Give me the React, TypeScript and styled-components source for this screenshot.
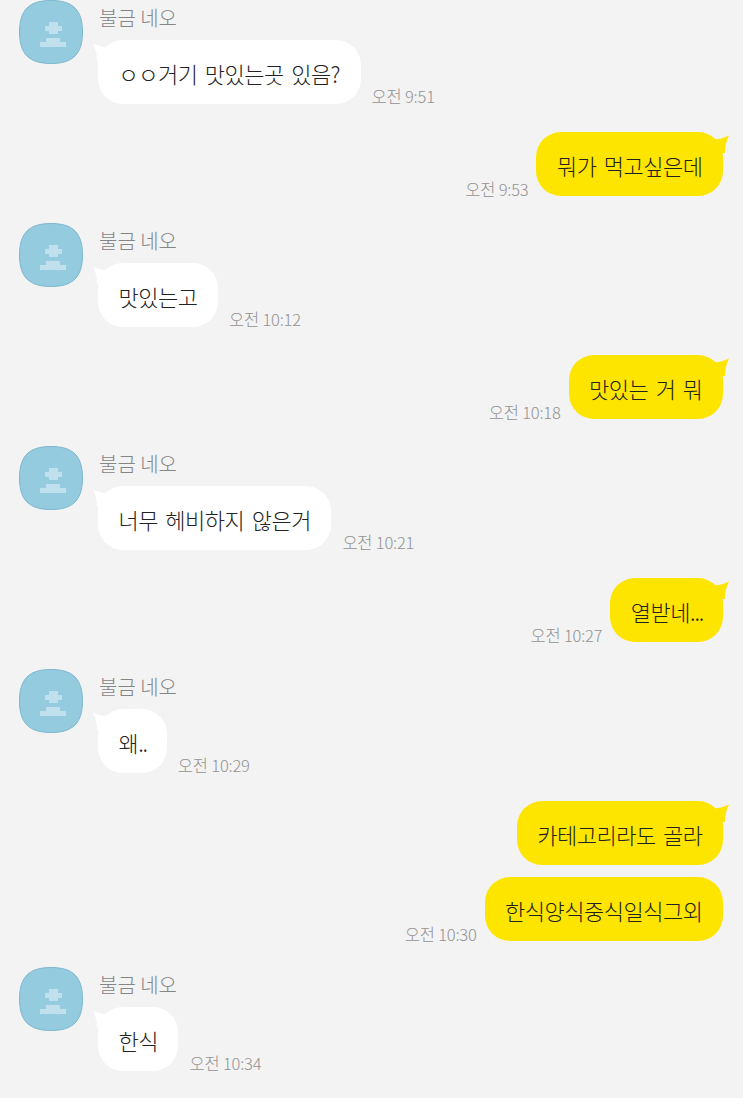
import React from "react";
import styled, { createGlobalStyle } from "styled-components";

const Global = createGlobalStyle`
  html, body { margin: 0; padding: 0; background: #f3f3f3; }
  body { font-family: "Noto Sans CJK KR", "Noto Sans", sans-serif; }
`;

const Chat = styled.div`
  width: 743px;
  height: 1098px;
  overflow: hidden;
  background: #f3f3f3;
  display: flex;
  flex-direction: column;
`;

const ReceivedRow = styled.div`
  display: flex;
  gap: 15px;
  padding-left: 19px;
  margin-bottom: 28px;
`;

const SentRow = styled.div<{ $gapBelow: number }>`
  display: flex;
  justify-content: flex-end;
  align-items: flex-end;
  gap: 8px;
  padding-right: 20px;
  margin-bottom: ${(p) => p.$gapBelow}px;
`;

const AvatarBox = styled.div`
  width: 64px;
  height: 64px;
  flex-shrink: 0;
`;

const Column = styled.div`
  display: flex;
  flex-direction: column;
`;

const Name = styled.div`
  height: 40px;
  font-size: 20px;
  line-height: 35px;
  color: #858585;
  font-weight: 300;
  padding-left: 1px;
`;

const BubbleLine = styled.div`
  display: flex;
  align-items: flex-end;
  gap: 11px;
`;

const Bubble = styled.div<{ $mine?: boolean }>`
  position: relative;
  height: 64px;
  box-sizing: border-box;
  padding: 1px 20.5px 0;
  border-radius: 25px;
  display: flex;
  align-items: center;
  font-size: 22px;
  font-weight: 300;
  letter-spacing: -0.5px;
  word-spacing: 3px;
  color: #222;
  white-space: pre;
  background: ${(p) => (p.$mine ? "#fee500" : "#ffffff")};
`;

// the periods in the reference are much narrower than the font's own
const Dots = styled.span`
  letter-spacing: -1.2px;
  margin-right: -0.5px;
`;

const TailSvg = styled.svg<{ $mine?: boolean }>`
  position: absolute;
  top: 3px;
  width: 18px;
  height: 18px;
  ${(p) => (p.$mine ? "right: -7px;" : "left: -6px;")}
`;

const Time = styled.div<{ $mine?: boolean }>`
  font-size: 16.5px;
  line-height: 17px;
  letter-spacing: -0.2px;
  margin-bottom: ${(p) => (p.$mine ? "-2px" : "-1px")};
  color: #929292;
  font-weight: 300;
  white-space: nowrap;
`;

function Avatar() {
  return (
    <AvatarBox>
      <svg width="64" height="64" viewBox="0 0 64 64">
        <path
          d="M32 .5C54 .5 63.5 10 63.5 32S54 63.5 32 63.5 .5 54 .5 32 10 .5 32 .5Z"
          fill="#94cbdf"
          stroke="#7db7ce"
          strokeWidth="1"
        />
        <path
          d="M30 22h9v4h4v5h-4v3h-9v-3h-4v-5h4zM27 38h14v4h6v5H21v-5h6z"
          fill="#bfe0ec"
        />
      </svg>
    </AvatarBox>
  );
}

function Tail({ mine }: { mine?: boolean }) {
  return (
    <TailSvg $mine={mine} viewBox="0 0 18 18">
      {mine ? (
        <path d="M0 5 Q10 4 17 .5 Q13 8 13 18 L0 18Z" fill="#fee500" />
      ) : (
        <path d="M18 5 Q8 4 1 .5 Q5 8 5 18 L18 18Z" fill="#ffffff" />
      )}
    </TailSvg>
  );
}

function Received({ children, time }: { children: React.ReactNode; time: string }) {
  return (
    <ReceivedRow>
      <Avatar />
      <Column>
        <Name>불금 네오</Name>
        <BubbleLine>
          <Bubble>
            <Tail />
            <span>{children}</span>
          </Bubble>
          <Time>{time}</Time>
        </BubbleLine>
      </Column>
    </ReceivedRow>
  );
}

function Sent({
  children,
  time,
  tail = true,
  gapBelow = 27,
}: {
  children: React.ReactNode;
  time?: string;
  tail?: boolean;
  gapBelow?: number;
}) {
  return (
    <SentRow $gapBelow={gapBelow}>
      {time && <Time $mine>{time}</Time>}
      <Bubble $mine>
        {tail && <Tail mine />}
        <span>{children}</span>
      </Bubble>
    </SentRow>
  );
}

export default function App() {
  return (
    <>
      <Global />
      <Chat>
        <Received time="오전 9:51">ㅇㅇ거기 맛있는곳 있음?</Received>
        <Sent time="오전 9:53">뭐가 먹고싶은데</Sent>
        <Received time="오전 10:12">맛있는고</Received>
        <Sent time="오전 10:18">맛있는 거 뭐</Sent>
        <Received time="오전 10:21">너무 헤비하지 않은거</Received>
        <Sent time="오전 10:27">
          열받네<Dots>...</Dots>
        </Sent>
        <Received time="오전 10:29">
          왜<Dots>..</Dots>
        </Received>
        <Sent gapBelow={12}>카테고리라도 골라</Sent>
        <Sent time="오전 10:30" tail={false} gapBelow={26}>
          한식양식중식일식그외
        </Sent>
        <Received time="오전 10:34">한식</Received>
      </Chat>
    </>
  );
}
